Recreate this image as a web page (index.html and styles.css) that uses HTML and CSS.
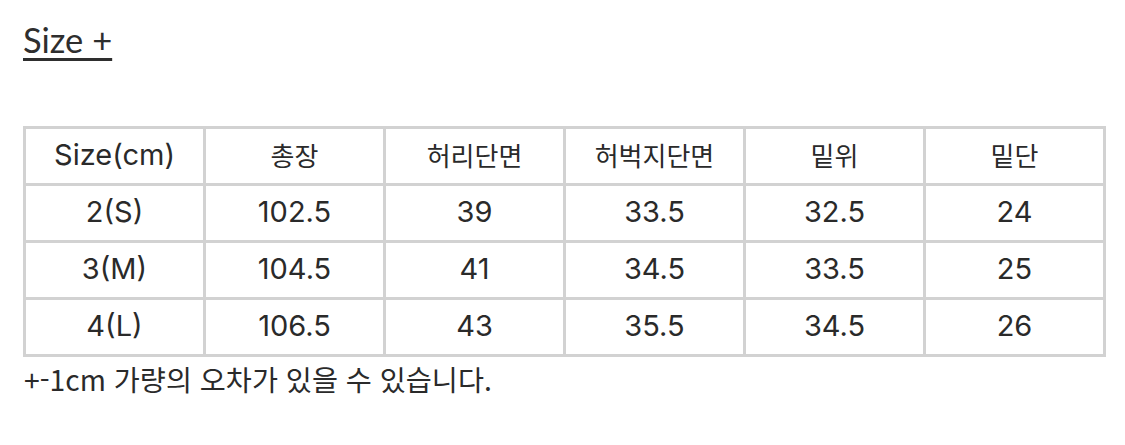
FILE: index.html
```html
<!DOCTYPE html>
<html lang="ko">
<head>
<meta charset="utf-8">
<link rel="stylesheet" href="styles.css">
</head>
<body>
<div class="page">
  <h2 class="title">Size +</h2>
  <table class="size-table">
    <tr><td>Size(cm)</td><td class="ko">총장</td><td class="ko">허리단면</td><td class="ko">허벅지단면</td><td class="ko">밑위</td><td class="ko">밑단</td></tr>
    <tr><td>2(S)</td><td>102.5</td><td>39</td><td>33.5</td><td>32.5</td><td>24</td></tr>
    <tr><td>3(M)</td><td>104.5</td><td>41</td><td>34.5</td><td>33.5</td><td>25</td></tr>
    <tr><td>4(L)</td><td>106.5</td><td>43</td><td>35.5</td><td>34.5</td><td>26</td></tr>
  </table>
  <p class="note">+-1cm 가량의 오차가 있을 수 있습니다.</p>
</div>
</body>
</html>
```
FILE: styles.css
```css
html, body {
  margin: 0;
  padding: 0;
  background: #ffffff;
}
.page {
  padding: 20px 0 0 23px;
  color: #2a2a2a;
  font-family: "Noto Sans CJK KR", "Noto Sans", sans-serif;
}
.title {
  margin: 0;
  font-family: Lato, "Noto Sans", sans-serif;
  font-weight: 400;
  font-size: 34.5px;
  line-height: 40px;
  height: 40px;
  text-decoration: underline;
  text-decoration-thickness: 2.5px;
  text-underline-offset: 5px;
  color: #2e2e2e;
}
.size-table {
  margin-top: 66px;
  width: 1083px;
  border-collapse: collapse;
  table-layout: fixed;
  border: 3px solid #d2d2d2;
}
.size-table td {
  border: 3px solid #d2d2d2;
  height: 51px;
  padding: 0 0 3px 0;
  text-align: center;
  vertical-align: middle;
  font-family: Inter, "Noto Sans CJK KR", sans-serif;
  font-size: 29px;
  line-height: 32px;
  color: #2a2a2a;
}
.size-table td.ko {
  font-family: "Noto Sans CJK KR", sans-serif;
  font-size: 26px;
}
.note {
  margin: 6px 0 0 1px;
  font-size: 28.3px;
  line-height: 32px;
  color: #2a2a2a;
}
```
